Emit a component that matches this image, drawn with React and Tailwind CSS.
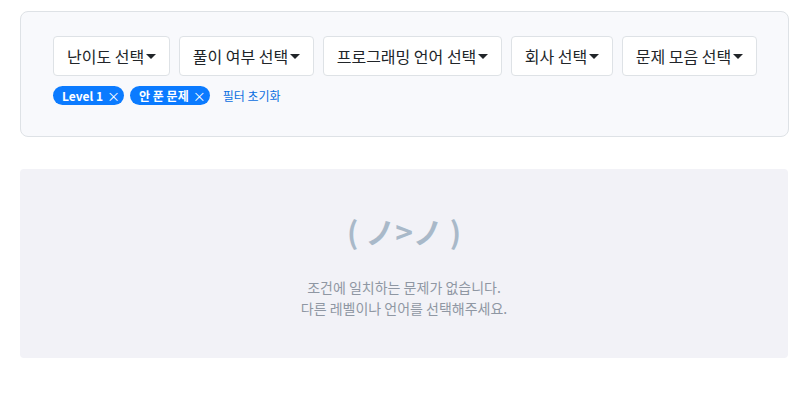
import React from "react";

function Caret() {
  return (
    <svg width="10" height="6" viewBox="0 0 10 6" className="ml-[2px] mt-[2px]">
      <path d="M0 0 L10 0 L5 5 Z" fill="#212529" />
    </svg>
  );
}

function Btn({ label }) {
  return (
    <button className="flex h-[40px] items-center rounded-[4px] border border-[#dee2e6] bg-white px-[13px] text-[16px] text-[#212529]">
      <span>{label}</span>
      <Caret />
    </button>
  );
}

function Badge({ label }) {
  return (
    <span className="flex h-[19px] items-center rounded-full bg-[#0b7bff] pl-[9px] pr-[4px] text-[12px] font-bold text-white">
      {label}
      <span className="ml-[4px] text-[13px] font-normal leading-none">×</span>
    </span>
  );
}

export default function App() {
  return (
    <div
      className="min-h-[409px] bg-white px-[20px] pt-[11px]"
      style={{ fontFamily: '"Noto Sans CJK KR", "Noto Sans", sans-serif' }}
    >
      <div className="w-[769px] rounded-[8px] border border-[#dee2e6] bg-[#f8f9fc] pb-[31px] pl-[32px] pt-[24px]">
        <div className="flex gap-[8.5px]">
          <Btn label="난이도 선택" />
          <Btn label="풀이 여부 선택" />
          <Btn label="프로그래밍 언어 선택" />
          <Btn label="회사 선택" />
          <Btn label="문제 모음 선택" />
        </div>
        <div className="mt-[10px] flex items-center gap-[6px]">
          <Badge label="Level 1" />
          <Badge label="안 푼 문제" />
          <span className="ml-[7px] text-[12px] text-[#0b6fe0]">필터 초기화</span>
        </div>
      </div>
      <div className="mt-[32px] flex h-[189px] w-[768px] flex-col items-center rounded-[4px] bg-[#f2f2f7] pt-[38px]">
        <div className="text-[30px] font-bold leading-[48px] text-[#a9b9c9]">( ノ&gt;ノ )</div>
        <div className="mt-[22px] text-center text-[14px] leading-[21px] text-[#8f97a3]">
          <div>조건에 일치하는 문제가 없습니다.</div>
          <div>다른 레벨이나 언어를 선택해주세요.</div>
        </div>
      </div>
    </div>
  );
}
